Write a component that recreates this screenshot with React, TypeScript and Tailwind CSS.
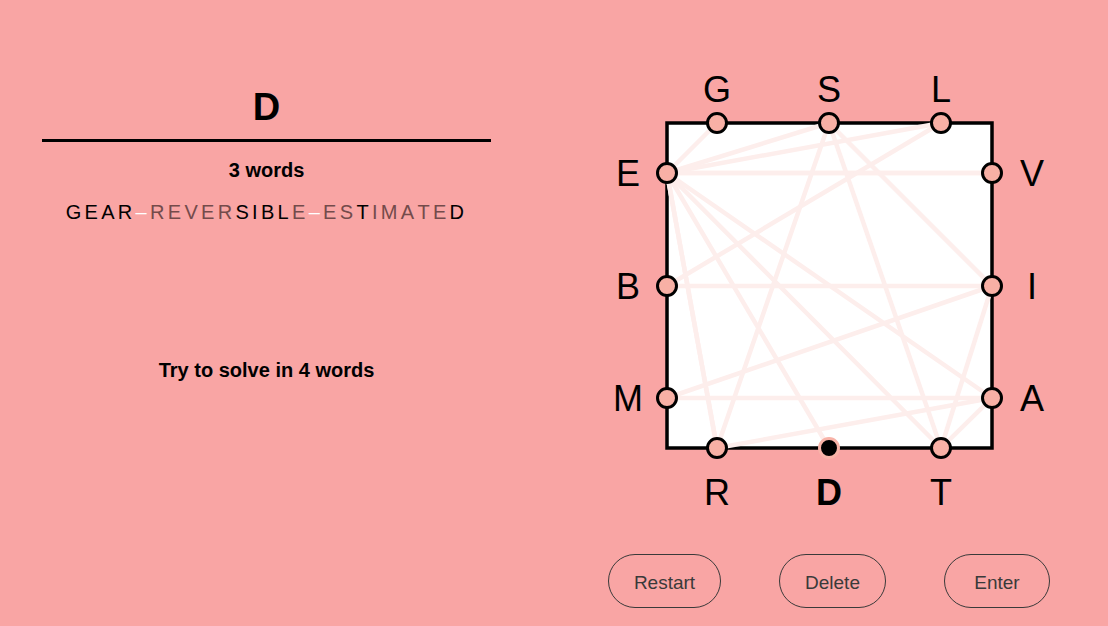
import React from "react";

type Pt = [number, number];

const nodes: Record<string, Pt> = {
  G: [120, 63],
  S: [232, 63],
  L: [344, 63],
  V: [395, 113],
  I: [395, 226],
  A: [395, 338],
  R: [120, 388],
  D: [232, 388],
  T: [344, 388],
  E: [70, 113],
  B: [70, 226],
  M: [70, 338],
};

const words = ["GEAR", "REVERSIBLE", "ESTIMATED"];

const edges: [string, string][] = [];
words.forEach((w) => {
  for (let i = 0; i < w.length - 1; i++) edges.push([w[i], w[i + 1]]);
});

// label placement for each side
const labelPos = (k: string): Pt => {
  const [x, y] = nodes[k];
  if (y === 63) return [x, 42];
  if (y === 388) return [x, 445];
  if (x === 70) return [31, y + 13];
  return [435, y + 13];
};

const dim = "text-[#744b4b]";

const letters: { c: string; cls: string }[] = [
  ...["G", "E", "A", "R"].map((c) => ({ c, cls: "text-black" })),
  { c: "–", cls: "text-white" },
  ...["R", "E", "V", "E", "R"].map((c) => ({ c, cls: dim })),
  ...["S", "I", "B", "L"].map((c) => ({ c, cls: "text-black" })),
  { c: "E", cls: dim },
  { c: "–", cls: "text-white" },
  ...["E", "S"].map((c) => ({ c, cls: dim })),
  { c: "T", cls: "text-black" },
  ...["I", "M", "A", "T", "E"].map((c) => ({ c, cls: dim })),
  { c: "D", cls: "text-black" },
];

const Board = () => (
  <svg width={465} height={470} viewBox="0 0 465 470">
    <rect x={70} y={63} width={325} height={325} fill="#ffffff" stroke="#000" strokeWidth={3.5} />
    {edges.map(([a, b], i) => (
      <line
        key={i}
        x1={nodes[a][0]}
        y1={nodes[a][1]}
        x2={nodes[b][0]}
        y2={nodes[b][1]}
        stroke="#fdeeec"
        strokeWidth={4.5}
      />
    ))}
    {Object.keys(nodes).map((k) => {
      const [x, y] = nodes[k];
      const [lx, ly] = labelPos(k);
      const current = k === "D";
      return (
        <g key={k}>
          {current ? (
            <circle cx={x} cy={y} r={9.5} fill="#000" stroke="#f8b3a8" strokeWidth={3} />
          ) : (
            <circle cx={x} cy={y} r={9.5} fill="#f8b0a5" stroke="#000" strokeWidth={3} />
          )}
          <text
            x={lx}
            y={ly}
            textAnchor="middle"
            fontSize={36}
            fontWeight={current ? 700 : 400}
            fill="#000"
            fontFamily="'Liberation Sans', Arial, sans-serif"
          >
            {k}
          </text>
        </g>
      );
    })}
  </svg>
);

const Button = ({ label, w }: { label: string; w: string }) => (
  <button
    className={`${w} h-[54px] rounded-full border border-[#3a3a3a] text-[19px] leading-none pt-[2px] text-[#3a3a3a] flex items-center justify-center`}
  >
    {label}
  </button>
);

export default function App() {
  return (
    <div
      className="w-[1108px] h-[626px] bg-[#f9a5a4] flex overflow-hidden"
      style={{ fontFamily: "'Liberation Sans', Arial, sans-serif" }}
    >
      <div className="ml-[42px] w-[449px] flex flex-col items-center pt-[87px]">
        <div className="text-[38px] font-bold leading-[40px] text-black">D</div>
        <div className="w-full h-[3px] bg-black mt-[12px]" />
        <div className="text-[20px] font-bold leading-[24px] mt-[16px] text-black">3 words</div>
        <div className="text-[20px] leading-[24px] mt-[18px] tracking-[3.3px] flex">
          {letters.map((l, i) => (
            <span key={i} className={l.cls}>
              {l.c}
            </span>
          ))}
        </div>
        <div className="text-[20px] font-bold leading-[24px] mt-[134px] text-black">
          Try to solve in 4 words
        </div>
      </div>
      <div className="ml-[106px] flex flex-col pt-[60px]">
        <Board />
        <div className="flex gap-[58px] pl-[11px] mt-[24px]">
          <Button label="Restart" w="w-[113px]" />
          <Button label="Delete" w="w-[107px]" />
          <Button label="Enter" w="w-[106px]" />
        </div>
      </div>
    </div>
  );
}
